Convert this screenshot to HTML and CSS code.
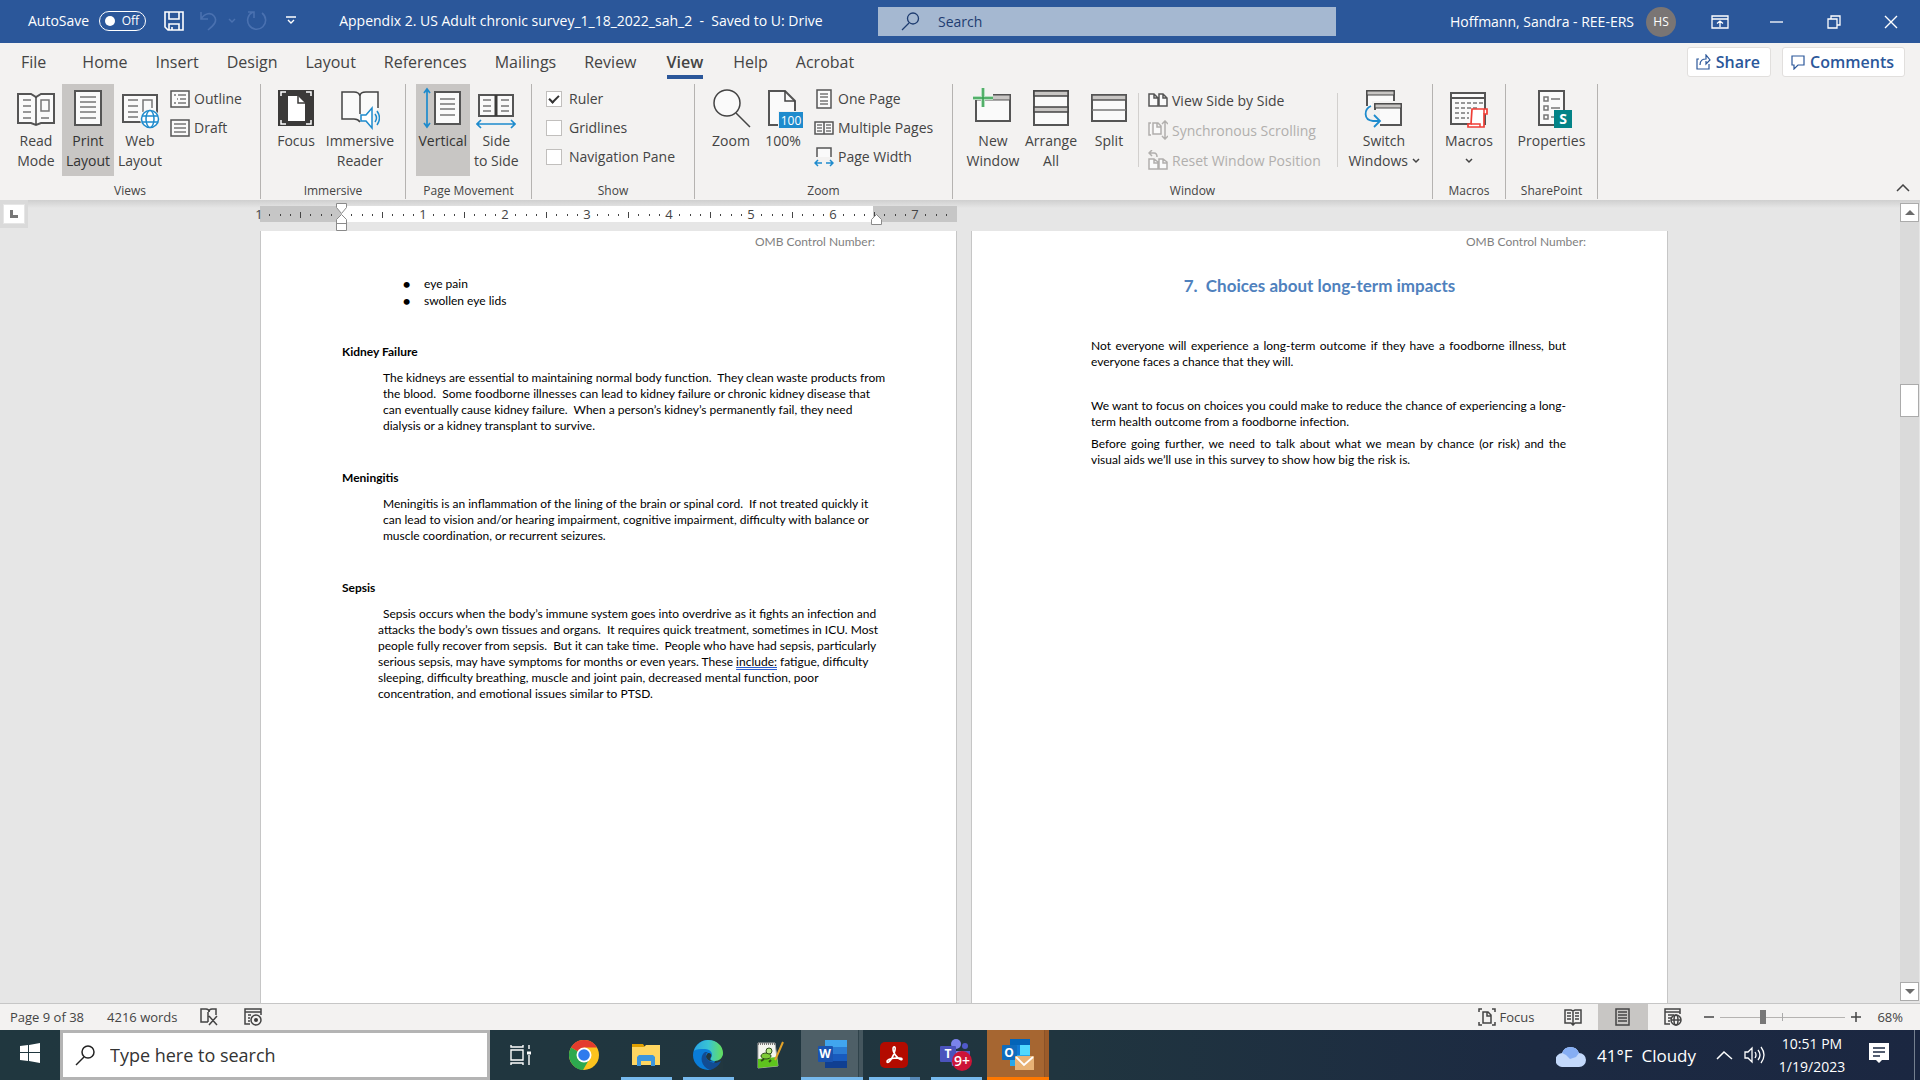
FILE: index.html
```
<!DOCTYPE html>
<html lang="en">

<head>
    <meta charset="UTF-8">
    <meta name="viewport" content="width=device-width, initial-scale=1.0">
    <title>Appendix 2. US Adult chronic survey_1_18_2022_sah_2</title>
    <link rel="stylesheet" href="styles.css">
</head>

<body>
    <header class="titlebar">
        <div class="quick-access">
            <span id="autosave-label">AutoSave</span>
            <button class="autosave" aria-labelledby="autosave-label"><i></i>Off</button>
            <button class="qa-btn save" aria-label="Save">
                <svg width="20" height="20" viewBox="0 0 20 20" fill="none" stroke="#fff" stroke-width="1.6"><path d="M1 1h18v18H4l-3-3zM5 1v7h10V1M5 19v-6h10v6M8 16v3" /></svg>
            </button>
            <button class="qa-btn undo" aria-label="Undo">
                <svg width="18" height="20" viewBox="0 0 18 20" fill="none" stroke="#4a71b0" stroke-width="1.6"><path d="M1 1v7h7M1 8C5 2 11 1 14 5c4 5 0 9-6 14" /></svg>
            </button>
            <button class="qa-btn caret" aria-label="Undo history">
                <svg width="8" height="6" viewBox="0 0 8 6" fill="none" stroke="#4a71b0" stroke-width="1.5"><path d="M1 1l3 3 3-3" /></svg>
            </button>
            <button class="qa-btn redo" aria-label="Repeat">
                <svg width="22" height="22" viewBox="0 0 22 22" fill="none" stroke="#4a71b0" stroke-width="1.6"><path d="M2 2h6v6M16 3a9 9 0 1 1-9-1" /></svg>
            </button>
            <button class="qa-btn customize" aria-label="Customize toolbar">
                <svg width="10" height="9" viewBox="0 0 10 9" fill="none" stroke="#fff" stroke-width="1.4"><path d="M0 1h10M2 4l3 3 3-3" /></svg>
            </button>
            <span class="doc-title">Appendix 2. US Adult chronic survey_1_18_2022_sah_2&nbsp; -&nbsp; Saved to U: Drive</span>
        </div>
        <label class="title-search">
            <svg width="19" height="19" viewBox="0 0 19 19" fill="none" stroke="#1e3c70" stroke-width="1.3"><circle cx="12" cy="6.500" r="5.500" /><path d="M8 11l-7 7" /></svg>
            <input type="text" placeholder="Search" aria-label="Search">
        </label>
        <div class="account">
            <span>Hoffmann, Sandra - REE-ERS</span>
            <span class="avatar">HS</span>
            <button class="win-btn" aria-label="Ribbon display options">
                <svg width="18" height="14" viewBox="0 0 18 14" fill="none" stroke="#fff" stroke-width="1.3"><path d="M1 1h16v12H1zM1 4h16M9 12V6M6 8.500l3-2.500 3 2.500" /></svg>
            </button>
            <button class="win-btn" aria-label="Minimize">
                <svg width="14" height="14" viewBox="0 0 14 14" stroke="#fff" stroke-width="1.3"><path d="M0 7h13" /></svg>
            </button>
            <button class="win-btn" aria-label="Restore">
                <svg width="14" height="14" viewBox="0 0 14 14" fill="none" stroke="#fff" stroke-width="1.3"><path d="M1 4h9v9H1zM4 4V1h9v9h-3" /></svg>
            </button>
            <button class="win-btn" aria-label="Close">
                <svg width="14" height="14" viewBox="0 0 14 14" stroke="#fff" stroke-width="1.4"><path d="M1 1l12 12M13 1L1 13" /></svg>
            </button>
        </div>
    </header>

    <nav class="tabs">
        <button class="tab file">File</button>
        <button class="tab">Home</button>
        <button class="tab">Insert</button>
        <button class="tab">Design</button>
        <button class="tab">Layout</button>
        <button class="tab">References</button>
        <button class="tab">Mailings</button>
        <button class="tab">Review</button>
        <button class="tab active">View</button>
        <button class="tab">Help</button>
        <button class="tab">Acrobat</button>
        <div class="tab-actions">
            <button class="action">
                <svg width="15" height="16" viewBox="0 0 15 16" fill="none" stroke="#2b579a" stroke-width="1.2"><path d="M3 5H1v10h12v-5M4 11c0-5 3-6 6-6V1l4 5-4 4V7" /></svg>
                Share
            </button>
            <button class="action">
                <svg width="14" height="15" viewBox="0 0 14 15" fill="none" stroke="#2b579a" stroke-width="1.2"><path d="M1 1h12v9H7l-4 4v-4H1z" /></svg>
                Comments
            </button>
        </div>
    </nav>

    <section class="ribbon">
        <div class="group views">
            <div class="group-body">
                <button class="big">
                    <svg class="ico" viewBox="0 0 40 44"><path class="page" d="M2 8h13l5 3 5-3h13v29H25l-5 2-5-2H2z" /><path class="line" d="M20 11v28" /><path class="thin" d="M7 14h8M7 20h8M7 26h8M7 32h8M25 14h8v11h-8zM25 32h8" /></svg>
                    <span>Read<br>Mode</span>
                </button>
                <button class="big selected">
                    <svg class="ico" viewBox="0 0 40 44"><path class="page" d="M7 5h26v34H7z" /><path class="thin" d="M12 11h16M12 16h16M12 21h16M12 26h16M12 32h16" /></svg>
                    <span>Print<br>Layout</span>
                </button>
                <button class="big">
                    <svg class="ico" viewBox="0 0 40 44"><path class="page" d="M3 9h34v27H3z" /><path class="thin" d="M8 14h10M8 20h10M8 26h10M8 31h10M23 26V14h9v8" /><circle cx="30" cy="33" r="10" fill="#f3f2f1" /><g fill="#fff" stroke="#1e8bcd" stroke-width="1.500"><circle cx="30" cy="33" r="8.500" /><ellipse cx="30" cy="33" rx="4" ry="8.500" /><path d="M22 30h16M22 36h16" /></g></svg>
                    <span>Web<br>Layout</span>
                </button>
                <div class="small-list">
                    <button class="small">
                        <svg width="20" height="18" viewBox="0 0 20 18"><path class="page" d="M1 1h18v16H1z" /><path class="thin" d="M4 5h2M8 5h8M7 9h1M10 9h6M4 13h2M8 13h8" /></svg>Outline
                    </button>
                    <button class="small">
                        <svg width="20" height="18" viewBox="0 0 20 18"><path class="page" d="M1 1h18v16H1z" /><path class="thin" d="M4 5h12M4 9h12M4 13h12" /></svg>Draft
                    </button>
                </div>
            </div>
            <div class="group-name">Views</div>
        </div>

        <div class="group immersive">
            <div class="group-body">
                <button class="big">
                    <svg class="ico" viewBox="0 0 40 44"><path d="M2 4h36v36H2z" fill="#3b3a39" /><path d="M5 10V6h5M30 6h5v4M5 34v4h5M30 38h5v-4" fill="none" stroke="#fff" stroke-width="1.500" /><path d="M12 10h10l7 7v18H12z" fill="#fff" /><path d="M22 10v7h7" fill="none" stroke="#3b3a39" stroke-width="1.500" /></svg>
                    <span>Focus</span>
                </button>
                <button class="big wide">
                    <svg class="ico" viewBox="0 0 40 44"><path d="M2 6h12q6 0 6 4 0-4 6-4h12v17l-12 12-6-6v7q-1-2-6-3H2z" fill="#fafafa" /><path class="line" d="M38 22V6H26q-6 0-6 4-1-4-6-4H2v27h12q4 0 6 3M20 10v18" /><path d="M21 29h5l6-7v20l-6-7h-5z" fill="#fff" stroke="#1e8bcd" stroke-width="1.500" /><path d="M35 28q3 4 0 8M37 25q5 7 0 14" fill="none" stroke="#1e8bcd" stroke-width="1.500" /></svg>
                    <span>Immersive<br>Reader</span>
                </button>
            </div>
            <div class="group-name">Immersive</div>
        </div>

        <div class="group movement">
            <div class="group-body">
                <button class="big selected">
                    <svg class="ico" viewBox="0 0 40 44"><path class="page" d="M12 6h25v32H12z" /><path class="thin" d="M17 13h15M17 18h15M17 23h15M17 29h15" /><path d="M4 3v38M1 7l3-4 3 4M1 37l3 4 3-4" fill="none" stroke="#1e8bcd" stroke-width="1.700" /></svg>
                    <span>Vertical</span>
                </button>
                <button class="big">
                    <svg class="ico" viewBox="0 0 40 44"><path class="page" d="M3 9h34v21H3z" /><path d="M20 9v21" stroke="#3b3a39" stroke-width="3" /><path class="thin" d="M7 14h8M7 20h8M7 25h8M25 14h8M25 20h8M25 25h8" /><path d="M1 38h38M5 34l-4 4 4 4M35 34l4 4-4 4" fill="none" stroke="#1e8bcd" stroke-width="1.700" /></svg>
                    <span>Side<br>to Side</span>
                </button>
            </div>
            <div class="group-name">Page Movement</div>
        </div>

        <div class="group show">
            <div class="group-body">
                <div class="small-list">
                    <label class="check"><input type="checkbox" checked>Ruler</label>
                    <label class="check"><input type="checkbox">Gridlines</label>
                    <label class="check"><input type="checkbox">Navigation Pane</label>
                </div>
            </div>
            <div class="group-name">Show</div>
        </div>

        <div class="group zoom">
            <div class="group-body">
                <button class="big">
                    <svg class="ico" viewBox="0 0 40 44"><circle cx="16" cy="17" r="13" class="lens" /><path class="line" d="M25 27l14 14" /></svg>
                    <span>Zoom</span>
                </button>
                <button class="big">
                    <svg class="ico" viewBox="0 0 40 44"><path class="page" d="M6 5h16l10 10v24H6z" /><path class="line" d="M22 5v10h10" /><path d="M15 25h25v18H15z" fill="#f3f2f1" /><path d="M16 26h24v16H16z" fill="#1e8bcd" /><text x="28" y="39" class="badge-100">100</text></svg>
                    <span>100%</span>
                </button>
                <div class="small-list">
                    <button class="small">
                        <svg width="20" height="20" viewBox="0 0 20 20"><path class="page" d="M3 1h14v18H3z" /><path class="thin" d="M6 5h8M6 8h8M6 12h8M6 15h8" /></svg>One Page
                    </button>
                    <button class="small">
                        <svg width="20" height="20" viewBox="0 0 20 20"><path class="page" d="M1 4h18v12H1zM10 4v12" /><path class="thin" d="M3 7h5M3 10h5M3 13h5M12 7h5M12 10h5M12 13h5" /></svg>Multiple Pages
                    </button>
                    <button class="small">
                        <svg width="20" height="20" viewBox="0 0 20 20"><path class="page" d="M3 10V1h14v9" /><path d="M1 16h7M12 16h7M4 13l-3 3 3 3M16 13l3 3-3 3" fill="none" stroke="#1e8bcd" stroke-width="1.500" /></svg>Page Width
                    </button>
                </div>
            </div>
            <div class="group-name">Zoom</div>
        </div>

        <div class="group window">
            <div class="group-body">
                <button class="big">
                    <svg class="ico" viewBox="0 0 40 44"><path class="page" d="M3 9h34v26H3z" /><path d="M3 9h34v5H3z" fill="#c8c6c4" stroke="#555" /><path d="M0 2h20v12H0z" fill="#f3f2f1" /><path d="M10 2v19M0 12h20" stroke="#b5dfc0" stroke-width="4" /><path d="M10 2v19M0 12h20" stroke="#33a14e" stroke-width="1.500" /></svg>
                    <span>New<br>Window</span>
                </button>
                <button class="big">
                    <svg class="ico" viewBox="0 0 40 44"><path class="page" d="M3 5h34v34H3z" /><path d="M3 5h34v5H3zM3 21h34v5H3z" fill="#c8c6c4" stroke="#444" stroke-width="1.500" /></svg>
                    <span>Arrange<br>All</span>
                </button>
                <button class="big">
                    <svg class="ico" viewBox="0 0 40 44"><path class="page" d="M3 9h34v26H3z" /><path d="M3 9h34v5H3z" fill="#c8c6c4" stroke="#555" stroke-width="1.500" /><path class="thin" d="M3 24h34" /></svg>
                    <span>Split</span>
                </button>
                <div class="small-list divided">
                    <button class="small">
                        <svg width="20" height="20" viewBox="0 0 20 20"><path class="page" d="M1 4h5l4 4v8H1zM11 4h4l4 4v8h-8zM6 4v4h4M15 4v4h4" /></svg>View Side by Side
                    </button>
                    <button class="small" disabled>
                        <svg width="20" height="20" viewBox="0 0 20 20"><path class="page" d="M5 3h5l3 3v8H5zM9 3v4h4M3 3H1v12h2M17 1v18M14 4l3-3 3 3M14 16l3 3 3-3" /></svg>Synchronous Scrolling
                    </button>
                    <button class="small" disabled>
                        <svg width="20" height="20" viewBox="0 0 20 20"><path class="page" d="M1 9h5l4 3v7H1zM11 9h4l4 3v7h-8zM6 9v4h4M15 9v4h4" /><path class="line" d="M4 0L1 3l3 3M1 3h5q3 0 3 4" /></svg>Reset Window Position
                    </button>
                </div>
                <button class="big switch">
                    <svg class="ico" viewBox="0 0 40 44"><path class="page" d="M3 5h27v20H3z" /><path d="M3 5h27v4H3z" fill="#c8c6c4" stroke="#444" /><path d="M8 15h25v6H8z" fill="#f3f2f1" /><path class="page" d="M11 18h26v21H11z" /><path d="M11 18h26v4H11z" fill="#c8c6c4" stroke="#444" /><path d="M0 20h10v4h6v17H8L0 34z" fill="#f3f2f1" /><path d="M7 20c-7 3-8 14 2 15h6M10 29l6 6-6 6" fill="none" stroke="#1e8bcd" stroke-width="1.800" /></svg>
                    <span>Switch<br>Windows <svg width="8" height="8" viewBox="0 0 8 8"><path class="line" d="M1 1l3 3 3-3" /></svg></span>
                </button>
            </div>
            <div class="group-name">Window</div>
        </div>

        <div class="group macros">
            <div class="group-body">
                <button class="big">
                    <svg class="ico" viewBox="0 0 40 44"><path class="page" d="M2 7h34v31H2zM2 12h34" /><path class="thin" d="M6 17h30M6 22h22M6 27h14M6 32h14" stroke-dasharray="4 2" /><path d="M23 23h15v5h-3v13H19v-3h3z" fill="#fff" stroke="#ef3e36" stroke-width="1.700" /><path d="M35 28v-5M22 38h9v3" fill="none" stroke="#ef3e36" stroke-width="1.500" /></svg>
                    <span>Macros<br><svg width="8" height="8" viewBox="0 0 8 8"><path class="line" d="M1 1l3 3 3-3" /></svg></span>
                </button>
            </div>
            <div class="group-name">Macros</div>
        </div>

        <div class="group sharepoint">
            <div class="group-body">
                <button class="big">
                    <svg class="ico" viewBox="0 0 40 44"><path class="page" d="M7 5h25v34H7z" /><path class="thin" d="M12 11h4v4h-4zM12 20h4v4h-4zM12 29h4v4h-4zM19 13h9M19 22h9M19 31h4" /><path d="M22 24h18v18H22z" fill="#038387" /><text x="31" y="38" class="badge-s">S</text></svg>
                    <span>Properties</span>
                </button>
            </div>
            <div class="group-name">SharePoint</div>
        </div>
        <button class="collapse" aria-label="Collapse the ribbon">
            <svg width="14" height="8" viewBox="0 0 14 8"><path class="line" d="M1 7l6-6 6 6" /></svg>
        </button>
    </section>

    <main class="workspace">
        <div class="tab-stop"><button aria-label="Tab stop">
            <svg width="8" height="8" viewBox="0 0 8 8"><path d="M0 0h3v5h5v3H0z" fill="#777" /></svg>
        </button></div>
        <div class="document">
            <div class="spread">
                <svg class="ruler" height="16" id="ruler" aria-hidden="true">
                    <rect width="100%" height="16" fill="#c6c6c6" />
                    <rect x="81" width="532" height="16" fill="#fff" />
                    <g id="ruler-marks"></g>
                    <g fill="#fff" stroke="#8a8a8a">
                        <path d="M76.500-2.500h10v4l-5 6-5-6zM81.500 8.500l5 5v11h-10v-11zM76.500 17.500h10" />
                        <path d="M616.500 8.500l5 5v5h-10v-5z" />
                    </g>
                </svg>
            </div>
            <div class="spread pages">
                <article class="paper">
                    <p class="running-head">OMB Control Number:</p>
                    <ul>
                        <li>eye pain</li>
                        <li>swollen eye lids</li>
                    </ul>
                    <h3>Kidney Failure</h3>
                    <p class="indent">The kidneys are essential to maintaining normal body function.&nbsp; They clean waste products from<br>
                        the blood.&nbsp; Some foodborne illnesses can lead to kidney failure or chronic kidney disease that<br>
                        can eventually cause kidney failure.&nbsp; When a person’s kidney’s permanently fail, they need<br>
                        dialysis or a kidney transplant to survive.</p>
                    <h3>Meningitis</h3>
                    <p class="indent">Meningitis is an inflammation of the lining of the brain or spinal cord.&nbsp; If not treated quickly it<br>
                        can lead to vision and/or hearing impairment, cognitive impairment, difficulty with balance or<br>
                        muscle coordination, or recurrent seizures.</p>
                    <h3>Sepsis</h3>
                    <p class="indent hanging">Sepsis occurs when the body’s immune system goes into overdrive as it fights an infection and<br>
                        attacks the body’s own tissues and organs.&nbsp; It requires quick treatment, sometimes in ICU. Most<br>
                        people fully recover from sepsis.&nbsp; But it can take time.&nbsp; People who have had sepsis, particularly<br>
                        serious sepsis, may have symptoms for months or even years. These <span class="grammar">include:</span> fatigue, difficulty<br>
                        sleeping, difficulty breathing, muscle and joint pain, decreased mental function, poor<br>
                        concentration, and emotional issues similar to PTSD.</p>
                </article>
                <article class="paper">
                    <p class="running-head">OMB Control Number:</p>
                    <h2>7.&nbsp; Choices about long-term impacts</h2>
                    <div class="column">
                        <p>Not everyone will experience a long-term outcome if they have a foodborne illness, but everyone faces a chance that they will.</p>
                        <p class="spaced">We want to focus on choices you could make to reduce the chance of experiencing a long-term health outcome from a foodborne infection.</p>
                        <p>Before going further, we need to talk about what we mean by chance (or risk) and the visual aids we’ll use in this survey to show how big the risk is.</p>
                    </div>
                </article>
            </div>
        </div>
        <div class="scrollbar">
            <button class="scroll-btn" aria-label="Scroll up"><svg width="10" height="6" viewBox="0 0 10 6"><path d="M0 5l5-5 5 5z" fill="#6b6b6b" /></svg></button>
            <div class="track"><div class="thumb"></div></div>
            <button class="scroll-btn" aria-label="Scroll down"><svg width="10" height="6" viewBox="0 0 10 6"><path d="M0 0l5 5 5-5z" fill="#6b6b6b" /></svg></button>
        </div>
    </main>

    <footer class="statusbar">
        <span class="page-count">Page 9 of 38</span>
        <span class="word-count">4216 words</span>
        <button class="status-btn proof" aria-label="Proofing errors">
            <svg width="18" height="18" viewBox="0 0 18 18"><path class="line" d="M8 14H1V1h5q3 0 3 3 0-3 3-3h4v6M8 4v10M9 8l8 9M17 8l-8 9" /></svg>
        </button>
        <button class="status-btn" aria-label="Record macro">
            <svg width="18" height="18" viewBox="0 0 18 18"><path class="line" d="M6 16H1V1h16v6M1 4h16M4 7h3M4 10h2M4 13h2" /><circle cx="12" cy="12" r="5" class="line" /><circle cx="12" cy="12" r="2" fill="#3b3a39" /></svg>
        </button>
        <div class="status-right">
            <button class="focus-btn">
                <svg width="18" height="18" viewBox="0 0 18 18"><path class="line" d="M4 1H1v3M14 1h3v3M1 14v3h3M17 14v3h-3M5 4h5l3 3v8H5zM9 4v4h4" /></svg>Focus
            </button>
            <button class="view-btn" aria-label="Read mode">
                <svg width="18" height="18" viewBox="0 0 18 18"><path class="line" d="M1 2h6l2 1 2-1h6v13h-6l-2 2-2-2H1zM9 3v13M3 5h4M3 8h4M3 11h4M11 5h4M11 8h4M11 11h4" /></svg>
            </button>
            <button class="view-btn on" aria-label="Print layout">
                <svg width="18" height="18" viewBox="0 0 18 18"><path class="line" d="M2 1h13v16H2zM4 4h9M4 7h9M4 10h9M4 13h9" /></svg>
            </button>
            <button class="view-btn" aria-label="Web layout">
                <svg width="18" height="18" viewBox="0 0 18 18"><path class="line" d="M6 16H1V1h15v5M1 4h15M4 7h6M4 10h3M4 13h2" /><g class="line"><circle cx="12" cy="12" r="5" /><ellipse cx="12" cy="12" rx="2" ry="5" /><path d="M7 12h10" /></g></svg>
            </button>
            <button class="step" aria-label="Zoom out"><svg width="10" height="10" viewBox="0 0 10 10"><path class="line" d="M0 5h10" /></svg></button>
            <input class="zoom-slider" type="range" min="0" max="100" value="33" aria-label="Zoom level">
            <button class="step" aria-label="Zoom in"><svg width="10" height="10" viewBox="0 0 10 10"><path class="line" d="M0 5h10M5 0v10" /></svg></button>
            <span class="percent">68%</span>
        </div>
    </footer>

    <div class="taskbar">
        <button class="start" aria-label="Start">
            <svg width="20" height="20" viewBox="0 0 20 20" fill="#fff"><path d="M0 3l8-1v7H0zM9 2l11-2v9H9zM0 10h8v8l-8-1zM9 10h11v10L9 18z" /></svg>
        </button>
        <label class="task-search">
            <svg width="21" height="21" viewBox="0 0 21 21" fill="none" stroke="#222" stroke-width="1.500"><circle cx="13" cy="7" r="6" /><path d="M9 12l-8 8" /></svg>
            <input type="text" placeholder="Type here to search" aria-label="Type here to search">
        </label>
        <button class="app task-view" aria-label="Task view">
            <svg width="22" height="20" viewBox="0 0 22 20" fill="none" stroke="#fff" stroke-width="1.400"><path d="M1 5h12v10H1zM1 0v2h12V0M1 20v-2h12v2M19 0v4M19 10v10" /><path d="M17 8h4" stroke-width="3" /></svg>
        </button>
        <button class="app" aria-label="Chrome">
            <svg width="30" height="30" viewBox="0 0 30 30"><circle cx="15" cy="15" r="15" fill="#fcc31e" /><path d="M15 15L2 7.500A15 15 0 0 1 28 7.500H15z" fill="#e33b2e" /><path d="M2 7.500A15 15 0 0 0 14 30l7-12-6-3z" fill="#2da94f" /><circle cx="15" cy="15" r="7.500" fill="#fff" /><circle cx="15" cy="15" r="5.800" fill="#2f7bed" /></svg>
        </button>
        <button class="app open" aria-label="File Explorer">
            <svg width="28" height="24" viewBox="0 0 28 24"><path d="M0 1h11l2 3H0z" fill="#e09f00" /><path d="M0 4h12l2-2h14v20H0z" fill="#ffd661" /><path d="M5 23v-9l2-2h14l2 2v9h-4v-5H9v5z" fill="#3d96dd" /></svg>
        </button>
        <button class="app open" aria-label="Edge">
            <svg width="30" height="30" viewBox="0 0 30 30"><defs><linearGradient id="edge-a"><stop offset="0" stop-color="#2aa5e0" /><stop offset=".5" stop-color="#39c4d4" /><stop offset="1" stop-color="#66df58" /></linearGradient></defs><circle cx="15" cy="15" r="15" fill="#0a7cd8" /><path d="M22 21l8-6v15H18z" fill="#22373f" /><path d="M1 11C3 4 9 0 15 0c9 0 15 6 15 13 0 5-4 8-8 8-3 0-5-1-4-3 3-5-1-9-6-9-5 0-9 0-11 2z" fill="url(#edge-a)" /><path d="M12 12c-6 4-4 15 5 18 4-1 9-4 11-9-5 3-11 2-14-2-2-3-1-6 1-7z" fill="#124c93" /><path d="M15 13c3 0 4 2 3 4-2 3 0 4 3 4-4 1-7-1-8-4 0-2 1-3 2-4z" fill="#22373f" /></svg>
        </button>
        <button class="app" aria-label="Notepad++">
            <svg width="28" height="28" viewBox="0 0 28 28"><path d="M2 2h17l3 23-20 2z" fill="#f5f5f0" stroke="#aaa" /><path d="M2 18l19-2 1 9-20 2z" fill="#5ec41e" /><ellipse cx="10" cy="15" rx="5" ry="3" fill="#7ecb36" stroke="#2f4d1a" /><circle cx="13" cy="10" r="3" fill="#b9e887" stroke="#2f4d1a" /><path d="M5 20l3-2M13 21l2-2" stroke="#2f4d1a" stroke-width="2" /><path d="M2 3h17" stroke="#777" stroke-width="2" stroke-dasharray="1 1" /><path d="M27 1l-7 16-1 2" fill="none" stroke="#e2a229" stroke-width="2" /></svg>
        </button>
        <button class="app open word" aria-label="Word">
            <svg width="29" height="28" viewBox="0 0 29 28"><path d="M7 0h22v7H7z" fill="#41a5ee" /><path d="M7 7h22v7H7z" fill="#2b7cd3" /><path d="M7 14h22v7H7z" fill="#185abd" /><path d="M7 21h22v7H7z" fill="#103f91" /><rect y="6" width="15" height="16" rx="1" fill="#1a53b0" /><text x="7" y="18" class="logo-letter">W</text></svg>
        </button>
        <button class="app open stacked" aria-label="Acrobat">
            <svg width="28" height="26" viewBox="0 0 28 26"><rect width="28" height="26" rx="5" fill="#b30b00" /><path d="M7 20c-1-4 14-5 15-3 0 3-9-4-9-10 0-3 3-3 2 1-1 6-6 14-8 12z" fill="none" stroke="#fff" stroke-width="1.600" /></svg>
        </button>
        <button class="app open" aria-label="Teams">
            <svg width="32" height="32" viewBox="0 0 32 32"><circle cx="16" cy="5" r="5" fill="#7b83eb" /><circle cx="25" cy="7" r="3" fill="#5059c9" /><path d="M10 12h20v10l-6 5H12z" fill="#5059c9" /><path d="M12 12h11v14H12z" fill="#7b83eb" /><rect y="7" width="16" height="16" rx="1" fill="#4b53bc" /><text x="8" y="19" class="logo-letter">T</text><circle cx="22" cy="22" r="10" fill="#cc1437" /><text x="22" y="27" class="logo-count">9+</text></svg>
        </button>
        <button class="app open outlook" aria-label="Outlook">
            <svg width="32" height="32" viewBox="0 0 32 32"><path d="M8 1h20v10H8z" fill="#0364b8" /><path d="M8 7h10v10H8z" fill="#0f78d4" /><path d="M18 7h10v10H18z" fill="#50d9ff" /><path d="M8 17h20v11H8z" fill="#28a8ea" /><rect y="7" width="15" height="15" rx="1" fill="#0f6cbd" /><text x="7" y="19" class="logo-letter">O</text><path d="M13 18h19v14H13z" fill="#e8b275" /><path d="M14 19l8 8 9-8" fill="none" stroke="#fff" stroke-width="1.800" /></svg>
        </button>
        <div class="tray">
            <svg width="30" height="24" viewBox="0 0 30 24"><path d="M7 24a7 7 0 0 1-1-14A9 9 0 0 1 23 10a7 7 0 0 1 0 14z" fill="#c3d9fb" /><path d="M6 10A9 9 0 0 1 23 10l-3 4-6 2-4-4z" fill="#86aef3" /></svg>
            <span class="temp">41°F&nbsp; Cloudy</span>
            <button class="tray-btn" aria-label="Hidden icons"><svg width="17" height="10" viewBox="0 0 17 10" fill="none" stroke="#fff" stroke-width="1.500"><path d="M1 9l7-7 8 7" /></svg></button>
            <button class="tray-btn volume" aria-label="Volume"><svg width="21" height="18" viewBox="0 0 21 18" fill="none" stroke="#fff" stroke-width="1.300"><path d="M1 6h3l4-4v14l-4-4H1zM11 6q2 3 0 6M14 4q4 5 0 10M17 1q6 8 0 16" /></svg></button>
            <div class="clock"><span>10:51 PM</span><span>1/19/2023</span></div>
            <button class="notice" aria-label="Notifications"><svg width="20" height="20" viewBox="0 0 20 20"><path d="M0 0h20v17h-7l-3 3-3-3H0z" fill="#fff" /><path d="M4 5h12M4 9h12M4 13h7" stroke="#1b2841" stroke-width="1.300" /></svg></button>
            <button class="peek" aria-label="Show desktop"></button>
        </div>
    </div>

    <script>
        const marks = document.getElementById("ruler-marks");
        const inch = 82;
        const origin = 81;
        let html = "";

        // eighth-inch dots, half-inch ticks, a number on each inch
        for (let i = -7; i <= 59; i++) {
            const x = Math.round(origin + i * inch / 8);
            if (i === 0) continue;
            if (i % 8 === 0) {
                html += `<text x="${x}" y="13">${Math.abs(i / 8)}</text>`;
            } else if (i % 4 === 0) {
                html += `<rect x="${x}" y="6" width="1" height="6" />`;
            } else {
                html += `<rect x="${x}" y="8" width="1" height="2" />`;
            }
        }
        html += `<text x="${origin - inch}" y="13">1</text>`;
        marks.innerHTML = html;
    </script>
</body>

</html>
```
FILE: styles.css
```
:root {
    --word-blue: #2b579a;
    --ribbon: #f3f2f1;
    --text: #444;
    --selected: #c8c6c4;
    --ui-font: "Open Sans", "Noto Sans", sans-serif;
    --doc-font: Lato, sans-serif;
}

* {
    box-sizing: border-box;
}

body {
    margin: 0;
    height: 100vh;
    display: flex;
    flex-direction: column;
    overflow: hidden;
    font-family: var(--ui-font);
    font-size: 14px;
    color: var(--text);
    background: #e6e6e6;
}

button,
input {
    font: inherit;
    color: inherit;
    border: none;
    background: none;
    padding: 0;
    margin: 0;
}

button {
    white-space: nowrap;
}

svg {
    flex: none;
}

.page {
    fill: #fafafa;
    stroke: #555;
    stroke-width: 2;
}

.small .page {
    stroke-width: 1.5;
}

.line,
.lens {
    fill: none;
    stroke: #444;
    stroke-width: 1.5;
}

.lens {
    fill: #fafafa;
}

.thin {
    fill: none;
    stroke: #777;
    stroke-width: 1.5;
}

/* title bar */
.titlebar {
    display: grid;
    grid-template-columns: 878fr 458fr 584fr;
    align-items: center;
    height: 43px;
    flex: none;
    background: var(--word-blue);
    color: #fff;
}

.quick-access {
    display: flex;
    align-items: center;
    padding: 0 0 2px 28px;
    white-space: nowrap;
}

.quick-access svg {
    display: block;
}

.autosave {
    display: flex;
    align-items: center;
    justify-content: space-between;
    width: 47px;
    height: 20px;
    margin-left: 10px;
    padding: 0 6px 0 5px;
    border: 1px solid #fff;
    border-radius: 10px;
    font-size: 12px;
}

.autosave i {
    width: 10px;
    height: 10px;
    border-radius: 50%;
    background: #fff;
}

.save {
    margin-left: 18px;
}

.undo {
    margin-left: 16px;
}

.caret {
    margin-left: 10px;
}

.redo {
    margin-left: 10px;
}

.customize {
    margin-left: 18px;
}

.doc-title {
    margin-left: 43px;
}

.title-search {
    display: flex;
    align-items: center;
    gap: 18px;
    height: 29px;
    padding-left: 23px;
    margin-bottom: 1px;
    background: #a5b8d1;
}

.title-search input {
    flex: 1;
}

.title-search input::placeholder {
    color: #1e3c70;
    opacity: 1;
}

.account {
    display: flex;
    align-items: center;
    justify-content: flex-end;
    padding-right: 1px;
}

.avatar {
    width: 30px;
    height: 30px;
    margin: 0 15px 0 12px;
    border-radius: 50%;
    background: #7a7574;
    font-size: 12px;
    line-height: 30px;
    text-align: center;
}

.win-btn {
    width: 57px;
}

.win-btn svg {
    display: block;
    margin: 0 auto;
}

/* ribbon tabs */
.tabs {
    display: flex;
    flex: none;
    height: 41px;
    padding-left: 7px;
    background: var(--ribbon);
    font-size: 16px;
}

.tab {
    height: 36px;
    margin: 0 14px;
    padding-top: 2px;
}

.tab.file {
    margin-right: 22px;
}

.tab.active {
    font-weight: 600;
    border-bottom: 4px solid var(--word-blue);
    padding-top: 6px;
    margin: 0 16px;
}

.tab-actions {
    display: flex;
    gap: 11px;
    margin: 4px 15px 0 auto;
}

.action {
    display: flex;
    align-items: center;
    gap: 5px;
    height: 30px;
    padding: 0 10px 0 8px;
    border: 1px solid #e1dfdd;
    border-radius: 3px;
    background: #fff;
    color: var(--word-blue);
    font-weight: 600;
}

/* ribbon */
.ribbon {
    display: flex;
    flex: none;
    height: 116px;
    background: var(--ribbon);
}

.group {
    display: flex;
    flex-direction: column;
    justify-content: space-between;
    height: 115px;
    border-right: 1px solid #b5b3b1;
}

.group-body {
    display: flex;
    padding: 0 8px;
}

.group-name {
    font-size: 12px;
    line-height: 16px;
    text-align: center;
}

.big {
    display: flex;
    flex-direction: column;
    align-items: center;
    width: 52px;
    height: 92px;
    padding-top: 2px;
    line-height: 20px;
}

.big.selected {
    background: var(--selected);
    color: #333;
}

.ico {
    width: 40px;
    height: 44px;
    display: block;
    margin-bottom: 1px;
}

.big.wide {
    width: 76px;
}

.small-list {
    display: flex;
    flex-direction: column;
}

.small,
.check {
    display: flex;
    align-items: center;
    flex: none;
    gap: 4px;
    height: 29px;
}

.small:disabled {
    color: #b1afad;
}

.small:disabled .page,
.small:disabled .line {
    stroke: #b1afad;
}

.check {
    gap: 7px;
    white-space: nowrap;
}

.check input {
    appearance: none;
    width: 16px;
    height: 16px;
    border: 1px solid #c1bfbd;
    background: #fff;
    display: grid;
    place-items: center;
}

.check input:checked::after {
    content: "";
    width: 4px;
    height: 8px;
    margin-bottom: 2px;
    border: solid #333;
    border-width: 0 2px 2px 0;
    transform: rotate(45deg);
}

.views {
    width: 261px;
}

.views .group-body {
    padding: 0 0 0 10px;
}

.views .small-list {
    margin-left: 4px;
}

.immersive {
    width: 145px;
}

.immersive .group-body {
    padding: 0 0 0 9px;
}

.movement {
    width: 126px;
}

.movement .group-body {
    padding: 0 8px 0 10px;
}

.movement .big {
    width: 54px;
}

.show {
    width: 163px;
}

.show .group-body {
    padding-left: 14px;
}

.zoom {
    width: 258px;
}

.zoom .group-body {
    padding: 0 10px;
}

.zoom .small-list {
    margin-left: 5px;
}

.window {
    width: 480px;
}

.window .group-body {
    padding: 0 0 0 11px;
}

.window .big {
    width: 58px;
}

.window .divided {
    justify-content: center;
    width: 200px;
    height: 74px;
    margin-top: 9px;
    padding: 0 0 0 9px;
    border: solid #d2d0ce;
    border-width: 0 1px;
}

.divided .small {
    height: 30px;
}

.window .switch {
    width: 92px;
}

.macros {
    width: 73px;
}

.macros .big {
    width: 56px;
}

.sharepoint {
    width: 92px;
}

.sharepoint .big {
    width: 76px;
}

.collapse {
    margin: auto 10px 4px auto;
}

.badge-100 {
    font-size: 12px;
    text-anchor: middle;
    fill: #fff;
}

.badge-s {
    font-size: 14px;
    font-weight: 700;
    text-anchor: middle;
    fill: #fff;
}

/* document area */
.workspace {
    display: flex;
    flex: 1;
    min-height: 0;
    background: linear-gradient(#cfcfcf, #e6e6e6 8px);
}

.tab-stop {
    width: 28px;
    height: 28px;
    padding: 4px 3px;
    background: #dadada;
}

.tab-stop button {
    display: grid;
    place-items: center;
    width: 22px;
    height: 20px;
    border: 1px solid #e6e6e6;
    background: #fff;
}

.document {
    flex: 1;
    display: flex;
    flex-direction: column;
    padding-top: 6px;
    overflow: hidden;
}

.spread {
    display: grid;
    grid-template-columns: repeat(2, minmax(0, 697px));
    justify-content: center;
    gap: 14px;
}

.pages {
    flex: 1;
    min-height: 0;
    margin-top: 9px;
}

.ruler {
    width: 100%;
    overflow: visible;
    z-index: 1;
}

#ruler-marks {
    font-size: 13px;
    text-anchor: middle;
    fill: #444;
}

.paper {
    padding: 3px 81px 0;
    background: #fff;
    border: solid #c6c6c6;
    border-width: 0 1px;
    overflow: hidden;
    font-family: var(--doc-font);
    font-size: 12px;
    line-height: 16px;
    color: #000;
}

.paper p {
    margin: 0;
}

.paper .running-head {
    color: #7f7f7f;
    text-align: right;
}

.paper ul {
    margin: 25px 0 35px;
    padding-left: 60px;
    line-height: 17px;
    list-style: none;
}

.paper li {
    display: flex;
}

.paper li::before {
    content: "•";
    width: 22px;
    font-size: 16px;
}

.paper h3 {
    margin: 0 0 10px;
    font-size: 12px;
}

.paper .indent {
    margin: 0 0 36px 41px;
    white-space: nowrap;
}

.paper .hanging {
    margin-left: 36px;
    text-indent: 5px;
}

.grammar {
    text-decoration: underline double #2b5fd0;
}

.paper h2 {
    margin: 24px 0 0;
    font-size: 17px;
    line-height: 24px;
    text-align: center;
    color: #4f81bd;
}

.column {
    margin: 40px 20px 0 38px;
    text-align: justify;
}

.column .spaced {
    margin: 28px 0 6px;
}

/* scroll bar */
.scrollbar {
    display: flex;
    flex-direction: column;
    width: 20px;
    padding: 3px 1px 2px 0;
}

.scroll-btn {
    display: grid;
    place-items: center;
    height: 19px;
    background: #fff;
    border: 1px solid #ababab;
}

.track {
    flex: 1;
    padding-top: 162px;
    background: #dadada;
}

.thumb {
    height: 33px;
    background: #fff;
    border: 1px solid #ababab;
}

/* status bar */
.statusbar {
    display: flex;
    align-items: center;
    flex: none;
    height: 27px;
    padding: 0 17px 0 10px;
    border-top: 1px solid #c6c6c6;
    background: var(--ribbon);
    font-size: 13px;
}

.statusbar svg {
    display: block;
}

.word-count {
    margin-left: 23px;
}

.proof {
    margin: 0 26px 0 22px;
}

.status-right {
    display: flex;
    align-items: center;
    height: 26px;
    margin-left: auto;
}

.focus-btn {
    display: flex;
    align-items: center;
    gap: 3px;
    margin-right: 14px;
}

.view-btn {
    display: grid;
    place-items: center;
    width: 50px;
    height: 26px;
}

.view-btn.on {
    background: var(--selected);
}

.step {
    margin: 0 6px;
}

.zoom-slider {
    appearance: none;
    width: 125px;
    height: 14px;
    background: linear-gradient(#aaa, #aaa) 50% 50% / 1px 8px no-repeat, linear-gradient(#b5b3b1, #b5b3b1) 0 50% / 100% 1px no-repeat;
}

.zoom-slider::-webkit-slider-thumb {
    appearance: none;
    width: 6px;
    height: 14px;
    background: #777;
}

.percent {
    margin-left: 10px;
}

/* taskbar */
.taskbar {
    display: flex;
    flex: none;
    height: 50px;
    background: linear-gradient(90deg, #20373f, #20353f 55%, #1c2a42 80%, #1b2741);
    color: #fff;
}

.start {
    width: 60px;
}

.task-search {
    display: flex;
    align-items: center;
    gap: 14px;
    width: 430px;
    padding-left: 12px;
    border: 3px solid #b4b4b4;
    background: #fff;
    color: #222;
    font-size: 18px;
}

.task-search input {
    flex: 1;
}

.task-search input::placeholder {
    color: #333;
    opacity: 1;
}

.app {
    display: grid;
    place-items: center;
    width: 62px;
    height: 50px;
}

.app.task-view {
    width: 63px;
    padding-right: 1px;
}

.app.open {
    background: linear-gradient(#76b9ed, #76b9ed) center bottom / 51px 3px no-repeat;
}

.app.stacked {
    background: linear-gradient(90deg, #76b9ed 41px, #5688b5 41px) center bottom / 51px 3px no-repeat;
}

.app.word {
    border-bottom: 3px solid #76b9ed;
    background: linear-gradient(90deg, #4e5f67 57px, #2f424a 57px, #2f424a 58px, #44565e 58px);
}

.app.outlook {
    border-bottom: 3px solid #ff7800;
    background: linear-gradient(90deg, #a66631 57px, #8a5228 57px, #8a5228 58px, #9c5b29 58px);
}

.logo-letter {
    font-size: 12px;
    font-weight: 700;
    text-anchor: middle;
    fill: #fff;
}

.logo-count {
    font-size: 14px;
    font-weight: 600;
    text-anchor: middle;
    fill: #fff;
}

.tray {
    display: flex;
    align-items: center;
    margin-left: auto;
}

.temp {
    margin-left: 11px;
    font-size: 17px;
}

.tray-btn {
    margin-left: 20px;
}

.tray-btn.volume {
    margin-left: 11px;
}

.tray-btn svg {
    display: block;
}

.clock {
    display: flex;
    flex-direction: column;
    align-items: center;
    width: 66px;
    margin: 0 24px 0 14px;
    line-height: 23px;
}

.peek {
    width: 6px;
    height: 50px;
    margin-left: 25px;
    border-left: 1px solid #75808f;
}
```
